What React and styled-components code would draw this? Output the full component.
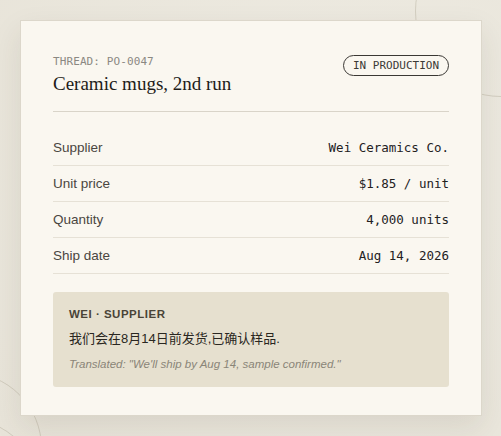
import React from "react";
import styled, { createGlobalStyle } from "styled-components";

const GlobalStyle = createGlobalStyle`
  html, body {
    margin: 0;
    padding: 0;
    background: #ebe7dd;
  }
  body {
    width: 501px;
    height: 436px;
    overflow: hidden;
    position: relative;
  }
`;

const Page = styled.div`
  position: relative;
  width: 501px;
  height: 436px;
  padding: 20px 19px 0 20px;
  box-sizing: border-box;
  background: radial-gradient(circle at 70% 40%, #eeebe2 0%, #e8e4d9 100%);
  overflow: hidden;
`;

/* faint decorative rings behind the card */
const Ring = styled.div`
  position: absolute;
  border: 1px solid rgba(180, 172, 155, 0.45);
  border-radius: 50%;
  width: ${(p) => p.size}px;
  height: ${(p) => p.size}px;
  left: ${(p) => p.x}px;
  top: ${(p) => p.y}px;
`;

const Card = styled.div`
  position: relative;
  z-index: 1;
  width: 462px;
  box-sizing: border-box;
  background: #faf7f0;
  border: 1px solid #dcd7cb;
  box-shadow: 0 12px 28px rgba(60, 50, 30, 0.1);
  padding: 32px 32px 28px 32px;
`;

const Header = styled.div`
  display: flex;
  justify-content: space-between;
  align-items: flex-start;
  padding-bottom: 14px;
  border-bottom: 1px solid #d9d4c9;
`;

const ThreadId = styled.div`
  padding-top: 2px;
  font-family: "DejaVu Sans Mono", monospace;
  font-size: 11px;
  letter-spacing: 0.1px;
  color: #8b8882;
  line-height: 14px;
`;

const Title = styled.h1`
  margin: 2px 0 0;
  font-family: "Liberation Serif", "Times New Roman", serif;
  font-weight: normal;
  font-size: 19px;
  line-height: 26px;
  color: #1e1c19;
`;

const Badge = styled.span`
  margin-top: 2px;
  font-family: "DejaVu Sans Mono", monospace;
  font-size: 11px;
  color: #3c3a36;
  border: 1.3px solid #3a3834;
  border-radius: 999px;
  padding: 3px 9px;
  line-height: 13px;
`;

const Rows = styled.div`
  margin-top: 18px;
  display: flex;
  flex-direction: column;
`;

const Row = styled.div`
  display: flex;
  justify-content: space-between;
  align-items: center;
  height: 36px;
  box-sizing: border-box;
  border-bottom: 1px solid #e6e1d6;
`;

const Label = styled.span`
  font-family: "Liberation Sans", Arial, sans-serif;
  font-size: 13.5px;
  color: #4a4641;
`;

const Value = styled.span`
  font-family: "DejaVu Sans Mono", monospace;
  font-size: 12.5px;
  color: #23211e;
`;

const Message = styled.div`
  margin-top: 18px;
  background: #e6e0cf;
  border-radius: 3px;
  padding: 15px 16px 16px;
  display: flex;
  flex-direction: column;
`;

const Sender = styled.div`
  font-family: "Liberation Sans", Arial, sans-serif;
  font-weight: bold;
  font-size: 11.5px;
  letter-spacing: 0.5px;
  color: #4a4437;
  line-height: 14px;
`;

const Original = styled.div`
  margin-top: 9px;
  font-family: "Liberation Sans", "Noto Sans CJK SC", sans-serif;
  font-size: 13px;
  color: #2a2721;
  line-height: 18px;
`;

const Translated = styled.div`
  margin-top: 9px;
  font-family: "Liberation Sans", Arial, sans-serif;
  font-style: italic;
  font-size: 11.5px;
  color: #8a8578;
  line-height: 14px;
`;

const details = [
  ["Supplier", "Wei Ceramics Co."],
  ["Unit price", "$1.85 / unit"],
  ["Quantity", "4,000 units"],
  ["Ship date", "Aug 14, 2026"],
];

export default function App() {
  return (
    <Page>
      <GlobalStyle />
      <Ring size={170} x={415} y={-75} />
      <Ring size={150} x={-110} y={372} />
      <Ring size={200} x={-150} y={414} />
      <Card>
        <Header>
          <div>
            <ThreadId>THREAD: PO-0047</ThreadId>
            <Title>Ceramic mugs, 2nd run</Title>
          </div>
          <Badge>IN PRODUCTION</Badge>
        </Header>
        <Rows>
          {details.map(([label, value]) => (
            <Row key={label}>
              <Label>{label}</Label>
              <Value>{value}</Value>
            </Row>
          ))}
        </Rows>
        <Message>
          <Sender>WEI · SUPPLIER</Sender>
          <Original>我们会在8月14日前发货,已确认样品.</Original>
          <Translated>
            Translated: "We'll ship by Aug 14, sample confirmed."
          </Translated>
        </Message>
      </Card>
    </Page>
  );
}
